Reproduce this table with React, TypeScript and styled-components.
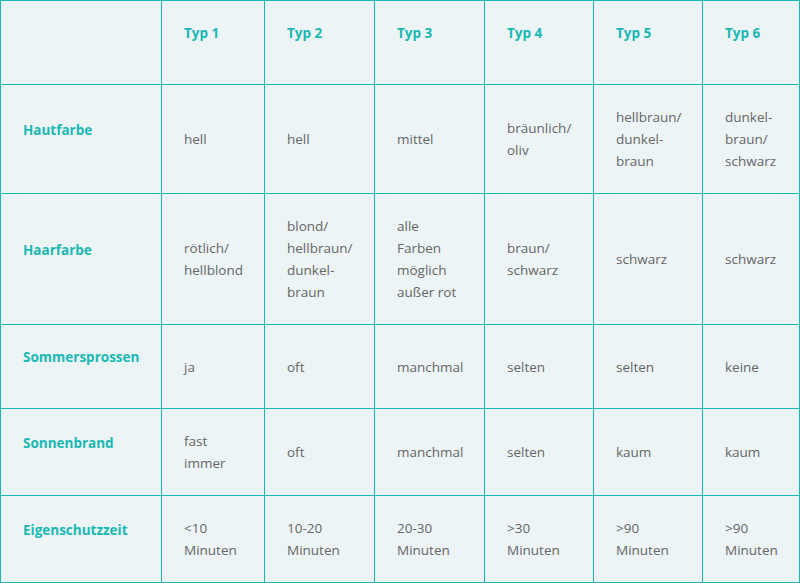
import React from "react";
import styled, { createGlobalStyle } from "styled-components";

const Global = createGlobalStyle`
  html, body { margin: 0; padding: 0; background: #ffffff; }
  body { font-family: "Open Sans", "Liberation Sans", sans-serif; }
`;

const Table = styled.table`
  width: 800px;
  table-layout: fixed;
  border-collapse: separate;
  border-spacing: 0;
  border-left: 1px solid #1ab6b1;
  border-top: 1px solid #1ab6b1;
  background: #ecf4f5;
  font-family: "Open Sans", "Liberation Sans", sans-serif;
  font-size: 13.5px;
  line-height: 22px;
`;

const HeadCell = styled.th`
  border-right: 1px solid #1ab6b1;
  border-bottom: 1px solid #1ab6b1;
  padding: 21px 22px;
  text-align: left;
  vertical-align: middle;
  color: #1ab8b3;
  font-weight: 700;
  white-space: nowrap;
`;

const HeadLabel = styled.p`
  margin: 0 0 19px 0;
`;

const Cell = styled.td`
  border-right: 1px solid #1ab6b1;
  border-bottom: 1px solid #1ab6b1;
  padding: 21px 22px;
  text-align: left;
  vertical-align: middle;
  color: #666666;
  white-space: nowrap;
`;

const widths = [161, 103, 110, 110, 109, 109, 97];

type Row = { label: string; values: string[][] };

const rows: Row[] = [
  {
    label: "Hautfarbe",
    values: [["hell"], ["hell"], ["mittel"], ["bräunlich/", "oliv"], ["hellbraun/", "dunkel-", "braun"], ["dunkel-", "braun/", "schwarz"]],
  },
  {
    label: "Haarfarbe",
    values: [["rötlich/", "hellblond"], ["blond/", "hellbraun/", "dunkel-", "braun"], ["alle", "Farben", "möglich", "außer rot"], ["braun/", "schwarz"], ["schwarz"], ["schwarz"]],
  },
  {
    label: "Sommersprossen",
    values: [["ja"], ["oft"], ["manchmal"], ["selten"], ["selten"], ["keine"]],
  },
  {
    label: "Sonnenbrand",
    values: [["fast", "immer"], ["oft"], ["manchmal"], ["selten"], ["kaum"], ["kaum"]],
  },
  {
    label: "Eigenschutzzeit",
    values: [["<10", "Minuten"], ["10-20", "Minuten"], ["20-30", "Minuten"], [">30", "Minuten"], [">90", "Minuten"], [">90", "Minuten"]],
  },
];

const Lines: React.FC<{ lines: string[] }> = ({ lines }) => (
  <>
    {lines.map((l, i) => (
      <React.Fragment key={i}>
        {i > 0 && <br />}
        {l}
      </React.Fragment>
    ))}
  </>
);

export default function App() {
  return (
    <>
      <Global />
      <Table>
        <colgroup>
          {widths.map((w, i) => (
            <col key={i} style={{ width: w }} />
          ))}
        </colgroup>
        <thead>
          <tr>
            <HeadCell />
            {[1, 2, 3, 4, 5, 6].map((n) => (
              <HeadCell key={n}>
                <HeadLabel>Typ {n}</HeadLabel>
              </HeadCell>
            ))}
          </tr>
        </thead>
        <tbody>
          {rows.map((r) => (
            <tr key={r.label}>
              <HeadCell>
                <HeadLabel>{r.label}</HeadLabel>
              </HeadCell>
              {r.values.map((v, i) => (
                <Cell key={i}>
                  <Lines lines={v} />
                </Cell>
              ))}
            </tr>
          ))}
        </tbody>
      </Table>
    </>
  );
}
